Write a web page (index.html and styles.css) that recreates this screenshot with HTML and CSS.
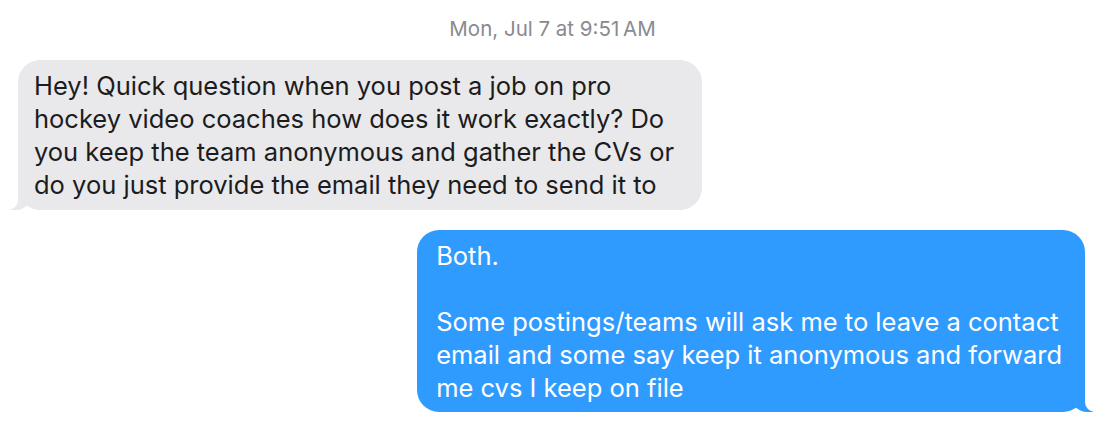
FILE: index.html
```html
<!DOCTYPE html>
<html lang="en">

<head>
  <meta charset="UTF-8" />
  <meta name="viewport" content="width=device-width, initial-scale=1.0" />
  <title>Messages</title>
  <link rel="stylesheet" href="styles.css">
</head>

<body>
  <div class="thread">
    <div class="timestamp">Mon, Jul 7 at 9:51&#8239;AM</div>

    <!-- Incoming -->
    <div class="row row-in">
      <div class="bubble in">
        Hey! Quick question when you post a job on pro<br>
        hockey video coaches how does it work exactly? Do<br>
        you keep the team anonymous and gather the CVs or<br>
        do you just provide the email they need to send it to
      </div>
    </div>

    <!-- Outgoing -->
    <div class="row row-out">
      <div class="bubble out">
        Both.<br>
        <br>
        Some postings/teams will ask me to leave a contact<br>
        email and some say keep it anonymous and forward<br>
        me cvs I keep on file
      </div>
    </div>
  </div>
</body>

</html>
```

FILE: styles.css
```css
/* General Styles */
body {
  margin: 0;
  padding: 0;
  background-color: #ffffff;
  font-family: Inter, "Noto Sans", Arial, sans-serif;
  -webkit-font-smoothing: antialiased;
}

.thread {
  display: flex;
  flex-direction: column;
  padding: 18px 19px 0 18px;
}

.timestamp {
  text-align: center;
  font-size: 20.5px;
  color: #8a8a8e;
  line-height: 22px;
  margin-bottom: 20px;
  padding-left: 2px;
}

.row {
  display: flex;
}

.row-out {
  justify-content: flex-end;
  margin-top: 20px;
}

/* Bubbles */
.bubble {
  position: relative;
  font-size: 25.5px;
  line-height: 33px;
  padding: 9px 28px 9px 16px;
  border-radius: 22px;
  white-space: nowrap;
}

.bubble.in {
  background-color: #e9e9eb;
  color: #1c1c1e;
}

.bubble.out {
  background-color: #309bfe;
  color: #ffffff;
  padding: 9px 23px 8px 19px;
}

/* Tails */
.bubble.in::before {
  content: "";
  position: absolute;
  bottom: 0;
  left: -8px;
  width: 22px;
  height: 22px;
  background-color: #e9e9eb;
  border-bottom-right-radius: 16px;
}

.bubble.in::after {
  content: "";
  position: absolute;
  bottom: 0;
  left: -12px;
  width: 12px;
  height: 22px;
  background-color: #ffffff;
  border-bottom-right-radius: 10px;
}

.bubble.out::before {
  content: "";
  position: absolute;
  bottom: 0;
  right: -8px;
  width: 22px;
  height: 22px;
  background-color: #309bfe;
  border-bottom-left-radius: 16px;
}

.bubble.out::after {
  content: "";
  position: absolute;
  bottom: 0;
  right: -12px;
  width: 12px;
  height: 22px;
  background-color: #ffffff;
  border-bottom-left-radius: 10px;
}
```
